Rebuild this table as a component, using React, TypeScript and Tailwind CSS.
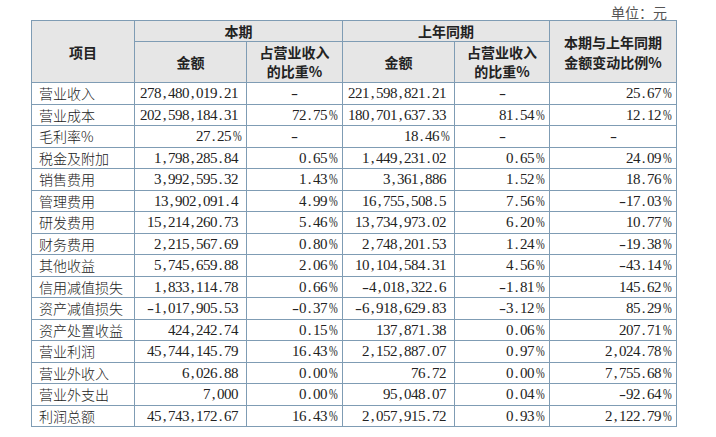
import React from "react";

const CJK = '"Noto Sans CJK SC", "Noto Sans", sans-serif';

type Row = [string, string, string, string, string, string];

const rows: Row[] = [
  ["营业收入", "278,480,019.21", "-", "221,598,821.21", "-", "25.67%"],
  ["营业成本", "202,598,184.31", "72.75%", "180,701,637.33", "81.54%", "12.12%"],
  ["毛利率%", "27.25%", "-", "18.46%", "-", "-"],
  ["税金及附加", "1,798,285.84", "0.65%", "1,449,231.02", "0.65%", "24.09%"],
  ["销售费用", "3,992,595.32", "1.43%", "3,361,886", "1.52%", "18.76%"],
  ["管理费用", "13,902,091.4", "4.99%", "16,755,508.5", "7.56%", "-17.03%"],
  ["研发费用", "15,214,260.73", "5.46%", "13,734,973.02", "6.20%", "10.77%"],
  ["财务费用", "2,215,567.69", "0.80%", "2,748,201.53", "1.24%", "-19.38%"],
  ["其他收益", "5,745,659.88", "2.06%", "10,104,584.31", "4.56%", "-43.14%"],
  ["信用减值损失", "1,833,114.78", "0.66%", "-4,018,322.6", "-1.81%", "145.62%"],
  ["资产减值损失", "-1,017,905.53", "-0.37%", "-6,918,629.83", "-3.12%", "85.29%"],
  ["资产处置收益", "424,242.74", "0.15%", "137,871.38", "0.06%", "207.71%"],
  ["营业利润", "45,744,145.79", "16.43%", "2,152,887.07", "0.97%", "2,024.78%"],
  ["营业外收入", "6,026.88", "0.00%", "76.72", "0.00%", "7,755.68%"],
  ["营业外支出", "7,000", "0.00%", "95,048.07", "0.04%", "-92.64%"],
  ["利润总额", "45,743,172.67", "16.43%", "2,057,915.72", "0.93%", "2,122.79%"],
];

function Num({ v }: { v: string }) {
  return (
    <span className="inline-flex text-[15px]" style={{ fontFamily: '"Liberation Serif", serif' }}>
      {v.split("").map((c, i) => (
        <span key={i} className="inline-block w-[7px] text-center">
          {c === "%" ? (
            <span className="inline-block scale-x-[0.7]">%</span>
          ) : c === "-" ? (
            <span className="inline-block scale-x-[1.4]">-</span>
          ) : (
            c
          )}
        </span>
      ))}
    </span>
  );
}

function Cell({ v }: { v: string }) {
  if (v === "-") {
    return (
      <td className="border border-[#7f9cb4] text-center p-0">
        <Num v="-" />
      </td>
    );
  }
  return (
    <td className="border border-[#7f9cb4] text-right pr-[8px] p-0">
      <Num v={v} />
    </td>
  );
}

export default function App() {
  const th = "border border-[#7f9cb4] bg-[#e6e6e6] font-bold text-center p-0";
  return (
    <div className="w-[716px] h-[437px] bg-white text-[#222] text-[14px] leading-none" style={{ fontFamily: CJK }}>
      <div className="pl-[31px] pt-[4px]">
        <div className="w-[644px] text-right pr-[8px] text-[#555] h-[16px] leading-[16px]">单位：元</div>
        <table className="border-collapse table-fixed w-[645px]">
          <colgroup>
            <col className="w-[103px]" />
            <col className="w-[112px]" />
            <col className="w-[96px]" />
            <col className="w-[112px]" />
            <col className="w-[95px]" />
            <col className="w-[127px]" />
          </colgroup>
          <thead>
            <tr className="h-[21px]">
              <th rowSpan={2} className={th}>项目</th>
              <th colSpan={2} className={th}>本期</th>
              <th colSpan={2} className={th}>上年同期</th>
              <th rowSpan={2} className={th + " leading-[20px]"}>
                本期与上年同期
                <br />
                金额变动比例%
              </th>
            </tr>
            <tr className="h-[41px]">
              <th className={th}>金额</th>
              <th className={th + " leading-[19px]"}>
                占营业收入
                <br />
                的比重%
              </th>
              <th className={th}>金额</th>
              <th className={th + " leading-[19px]"}>
                占营业收入
                <br />
                的比重%
              </th>
            </tr>
          </thead>
          <tbody>
            {rows.map((r, i) => (
              <tr key={i} className="h-[21.5px]">
                <td className="border border-[#7f9cb4] pl-[7px] p-0 font-light whitespace-nowrap">{r[0]}</td>
                <Cell v={r[1]} />
                <Cell v={r[2]} />
                <Cell v={r[3]} />
                <Cell v={r[4]} />
                <Cell v={r[5]} />
              </tr>
            ))}
          </tbody>
        </table>
      </div>
    </div>
  );
}
